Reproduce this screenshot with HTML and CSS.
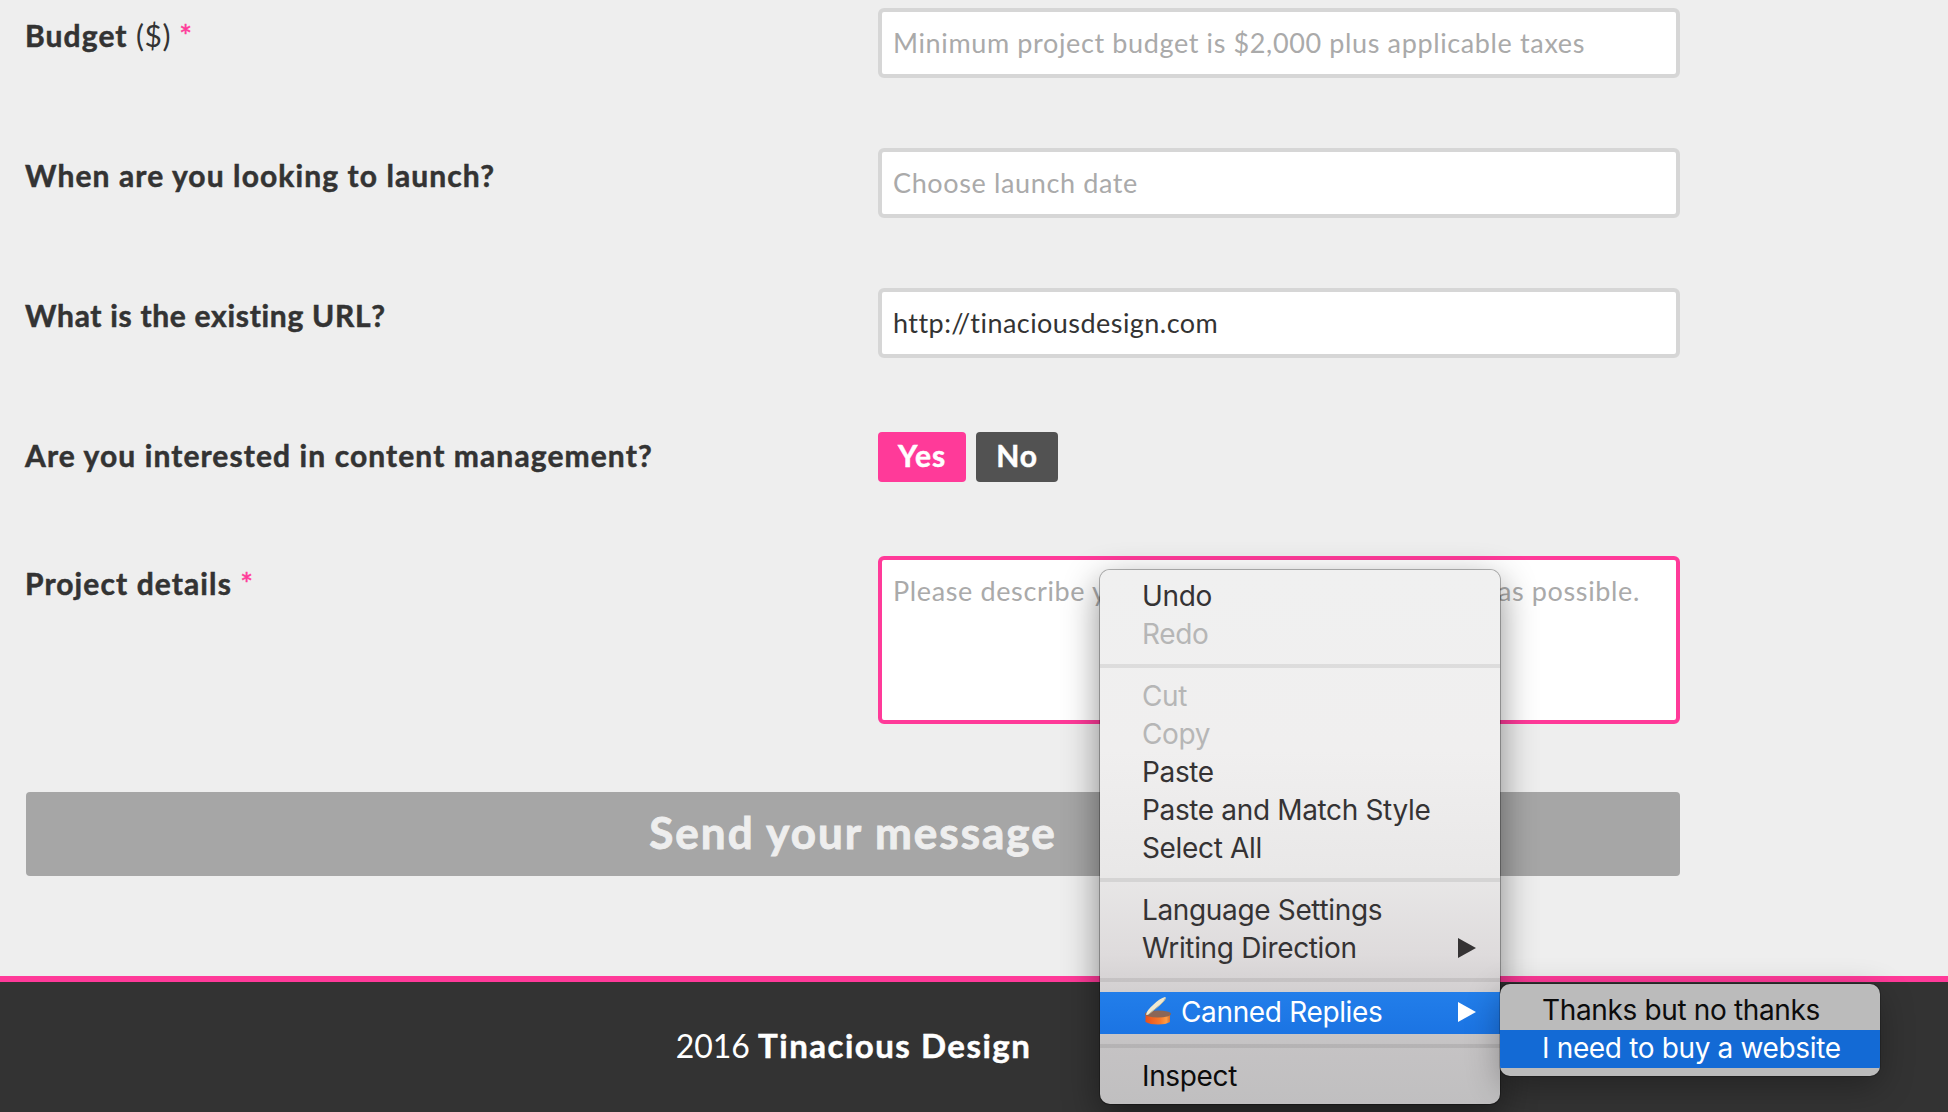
FILE: index.html
```
<!DOCTYPE html>
<html lang="en">
<head>
  <meta charset="UTF-8" />
  <title>Tinacious Design</title>
  <meta name="viewport" content="width=device-width, initial-scale=1.0" />
  <link rel="stylesheet" href="styles.css">
</head>
<body>
  <form class="contact-form">
    <div class="form-row">
      <label for="budget">Budget <span class="unit">($)</span> <span class="required">*</span></label>
      <input id="budget" type="text" placeholder="Minimum project budget is $2,000 plus applicable taxes" />
    </div>
    <div class="form-row">
      <label for="launch">When are you looking to launch?</label>
      <input id="launch" type="text" placeholder="Choose launch date" />
    </div>
    <div class="form-row">
      <label for="url" class="tight">What is the existing URL?</label>
      <input id="url" class="url" type="text" value="http://tinaciousdesign.com" />
    </div>
    <div class="form-row cms-row">
      <label>Are you interested in content management?</label>
      <div class="toggle">
        <button type="button" class="active">Yes</button>
        <button type="button">No</button>
      </div>
    </div>
    <div class="form-row">
      <label for="details">Project details <span class="required">*</span></label>
      <textarea id="details" placeholder="Please describe your project with as much detail as possible."></textarea>
    </div>
    <button type="button" class="send">Send your message</button>
  </form>

  <footer>
    <p>2016 <strong>Tinacious Design</strong></p>
  </footer>

  <!-- right click menu -->
  <div class="menu context-menu">
    <div class="item">Undo</div>
    <div class="item disabled">Redo</div>
    <hr />
    <div class="item disabled">Cut</div>
    <div class="item disabled">Copy</div>
    <div class="item">Paste</div>
    <div class="item">Paste and Match Style</div>
    <div class="item">Select All</div>
    <hr />
    <div class="item">Language Settings</div>
    <div class="item">Writing Direction
      <svg class="arrow" width="18" height="20" viewBox="0 0 18 20"><path d="M0 0 L18 10 L0 20 Z" fill="currentColor"/></svg>
    </div>
    <hr />
    <div class="item selected extension">
      <svg class="can" width="28" height="30" viewBox="0 0 28 30">
        <defs>
          <linearGradient id="tin" x1="0" x2="1">
            <stop offset="0" stop-color="#e8501c"/>
            <stop offset="0.6" stop-color="#f97a2c"/>
            <stop offset="0.85" stop-color="#ff9d45"/>
            <stop offset="1" stop-color="#d9702f"/>
          </linearGradient>
        </defs>
        <path d="M1.5 17 V26 Q6 28.5 14 28.5 Q22 28.5 26 26 V17 Z" fill="url(#tin)"/>
        <ellipse cx="14" cy="18" rx="13" ry="3.4" fill="#8b6656"/>
        <path d="M2 18.5 Q3 14 9 9 Q16 2 21 1 Q24 1.5 17 8 L5 18 Q3 19.5 2 18.5 Z" fill="#efe9d0"/>
        <path d="M4.5 18.4 L16 9 Q21 4.5 21.5 2" stroke="#b5b5a0" stroke-width="1" fill="none"/>
      </svg>
      Canned Replies
      <svg class="arrow" width="18" height="20" viewBox="0 0 18 20"><path d="M0 0 L18 10 L0 20 Z" fill="currentColor"/></svg>
    </div>
    <hr />
    <div class="item inspect">Inspect</div>
  </div>

  <div class="menu submenu">
    <div class="item">Thanks but no thanks</div>
    <div class="item selected">I need to buy a website</div>
  </div>
</body>
</html>
```
FILE: styles.css
```
* {
  box-sizing: border-box;
}
body {
  margin: 0;
  height: 1112px;
  overflow: hidden;
  display: flex;
  flex-direction: column;
  position: relative;
  background: #eee;
  color: #333;
  font-family: Lato, "Open Sans", sans-serif;
}
.contact-form {
  width: 1654px;
  margin: 8px 0 100px 26px;
}
.form-row {
  display: grid;
  grid-template-columns: 852px 802px;
  align-items: start;
  margin-bottom: 70px;
}
label {
  margin-left: -1px;
  font-size: 30px;
  font-weight: 700;
  line-height: 55px;
  letter-spacing: 1.1px;
  -webkit-text-stroke: 0.5px;
}
label.tight {
  letter-spacing: 0.7px;
}
.unit {
  font-weight: 400;
  letter-spacing: 0.5px;
  -webkit-text-stroke: 0;
}
.required {
  color: #ff3a99;
  font-weight: 400;
}
input,
textarea {
  display: block;
  width: 100%;
  border: 4px solid #d6d6d6;
  border-radius: 6px;
  background: #fff;
  color: #333;
  font-family: inherit;
  font-size: 27px;
  letter-spacing: 0.63px;
  outline: none;
}
input {
  height: 70px;
  padding: 0 11px 2px;
}
input.url {
  letter-spacing: 0.45px;
}
textarea {
  height: 168px;
  padding: 12px 0 12px 11px;
  line-height: 38px;
  border-color: #ff3a99;
  resize: none;
}
::placeholder {
  color: #aaa;
  opacity: 1;
}
.cms-row {
  height: 58px;
}
.toggle {
  display: flex;
  gap: 10px;
  padding-top: 4px;
}
.toggle button {
  width: 82px;
  height: 50px;
  padding: 0 0 4px;
  border: none;
  border-radius: 4px;
  background: #525252;
  color: #fff;
  font: 700 30px Lato, sans-serif;
  letter-spacing: 0.9px;
  -webkit-text-stroke: 0.5px;
}
.toggle .active {
  width: 88px;
  background: #ff3a99;
}
.send {
  display: block;
  width: 100%;
  height: 84px;
  margin-top: -2px;
  padding: 0 0 4px;
  border: none;
  border-radius: 4px;
  background: #a6a6a6;
  color: #eee;
  font: 700 44px Lato, sans-serif;
  letter-spacing: 2px;
  -webkit-text-stroke: 0.9px;
}
footer {
  flex: 1;
  border-top: 6px solid #ff3a99;
  background: #333;
  color: #fff;
}
footer p {
  width: 1707px;
  margin: 0;
  padding-top: 43px;
  text-align: center;
  font-size: 32px;
  line-height: 40px;
}
footer strong {
  font-size: 33px;
  letter-spacing: 1.5px;
  -webkit-text-stroke: 0.5px;
}

/* menus */
.menu {
  position: absolute;
  padding: 8px 0;
  border-radius: 10px;
  overflow: hidden;
  font-family: Inter, Roboto, sans-serif;
  font-size: 28px;
  letter-spacing: -0.35px;
  white-space: nowrap;
}
.context-menu {
  left: 1100px;
  top: 570px;
  width: 400px;
  background: linear-gradient(#f0f0f0 0, #f0efef 180px, #e9e8e8 300px, #dedbdc 385px, #cdcacb 440px, #c5c3c4 475px, #c0bfc0 534px);
  box-shadow: 0 0 0 1px rgba(0, 0, 0, 0.28), 0 12px 36px rgba(0, 0, 0, 0.45);
}
.submenu {
  left: 1500px;
  top: 984px;
  width: 380px;
  background: #bbb;
  box-shadow: 0 0 0 1px rgba(0, 0, 0, 0.2), 0 10px 34px rgba(0, 0, 0, 0.3);
}
.item {
  display: flex;
  align-items: center;
  height: 38px;
  padding: 0 24px 2px 42px;
  color: #353334;
}
.item.disabled {
  color: #b6b6b6;
}
.item.selected {
  background: #136ad5;
  color: #fff;
}
.item.extension {
  height: 42px;
  background: linear-gradient(#227eea, #1b74e3);
}
.item.inspect,
.submenu .item:not(.selected) {
  color: #0c0c0c;
}
.menu hr {
  height: 4px;
  margin: 10px 0;
  border: none;
  background: rgba(0, 0, 0, 0.08);
}
.arrow {
  margin-left: auto;
}
.can {
  margin: -2px 9px 0 2px;
}
```
